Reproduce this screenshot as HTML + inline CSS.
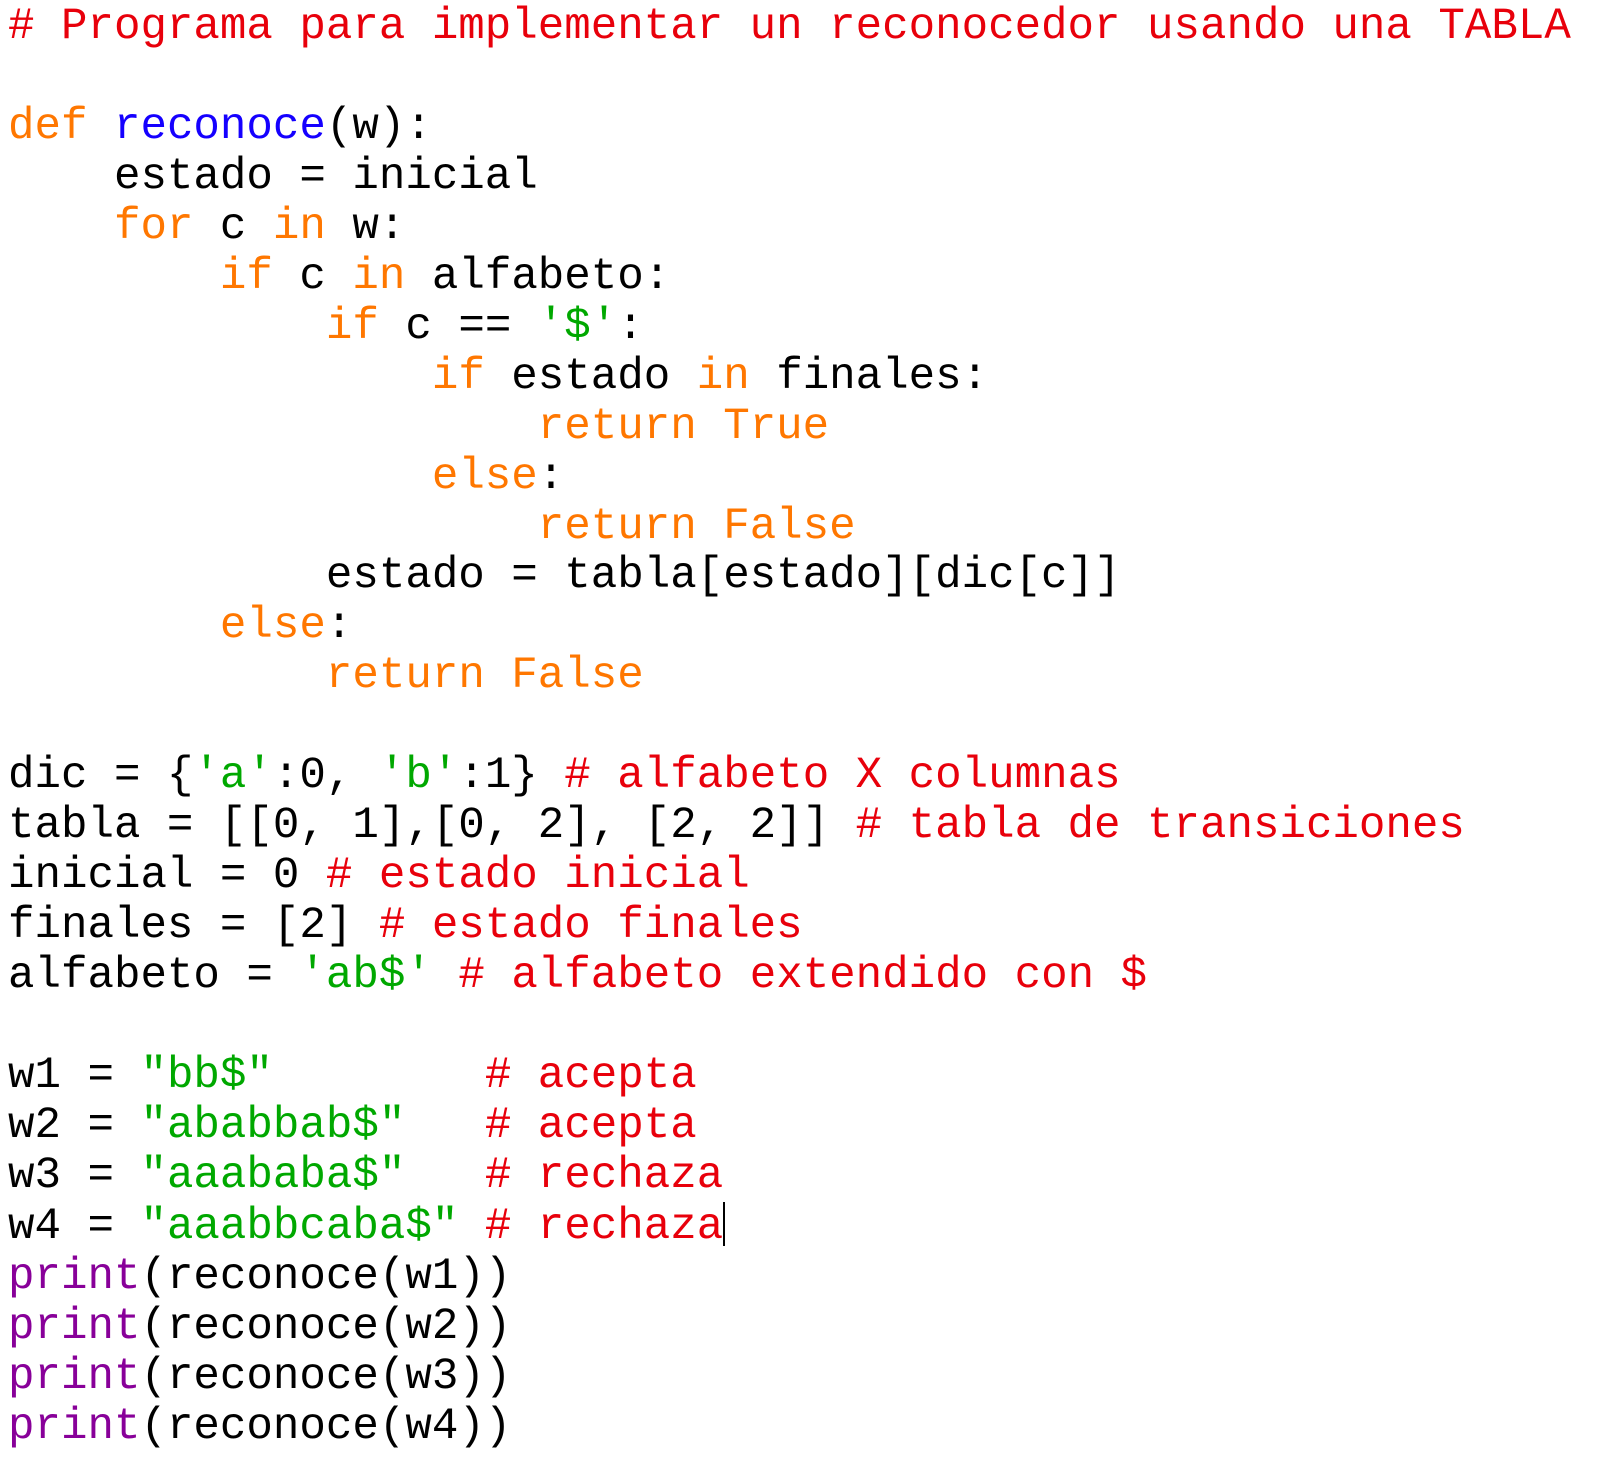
<!DOCTYPE html>
<html><head><meta charset="utf-8"><style>
html,body{margin:0;padding:0;background:#fff;width:1604px;height:1464px;overflow:hidden}
pre{margin:0;padding:3px 0 0 8px;font-family:"Liberation Mono",monospace;font-size:44.15px;line-height:49.95px;color:#000}
.c{color:#e8000b}.k{color:#ff7700}.f{color:#1500ff}.s{color:#00a800}.p{color:#880099}
.cur{display:inline-block;width:2px;height:44px;background:#000;vertical-align:-8px}
</style></head><body><pre><span class="c"># Programa para implementar un reconocedor usando una TABLA</span>

<span class="k">def</span> <span class="f">reconoce</span>(w):
    estado = inicial
    <span class="k">for</span> c <span class="k">in</span> w:
        <span class="k">if</span> c <span class="k">in</span> alfabeto:
            <span class="k">if</span> c == <span class="s">'$'</span>:
                <span class="k">if</span> estado <span class="k">in</span> finales:
                    <span class="k">return True</span>
                <span class="k">else</span>:
                    <span class="k">return False</span>
            estado = tabla[estado][dic[c]]
        <span class="k">else</span>:
            <span class="k">return False</span>

dic = {<span class="s">'a'</span>:0, <span class="s">'b'</span>:1} <span class="c"># alfabeto X columnas</span>
tabla = [[0, 1],[0, 2], [2, 2]] <span class="c"># tabla de transiciones</span>
inicial = 0 <span class="c"># estado inicial</span>
finales = [2] <span class="c"># estado finales</span>
alfabeto = <span class="s">'ab$'</span> <span class="c"># alfabeto extendido con $</span>

w1 = <span class="s">"bb$"</span>        <span class="c"># acepta</span>
w2 = <span class="s">"ababbab$"</span>   <span class="c"># acepta</span>
w3 = <span class="s">"aaababa$"</span>   <span class="c"># rechaza</span>
w4 = <span class="s">"aaabbcaba$"</span> <span class="c"># rechaza</span><span class="cur"></span>
<span class="p">print</span>(reconoce(w1))
<span class="p">print</span>(reconoce(w2))
<span class="p">print</span>(reconoce(w3))
<span class="p">print</span>(reconoce(w4))</pre></body></html>
